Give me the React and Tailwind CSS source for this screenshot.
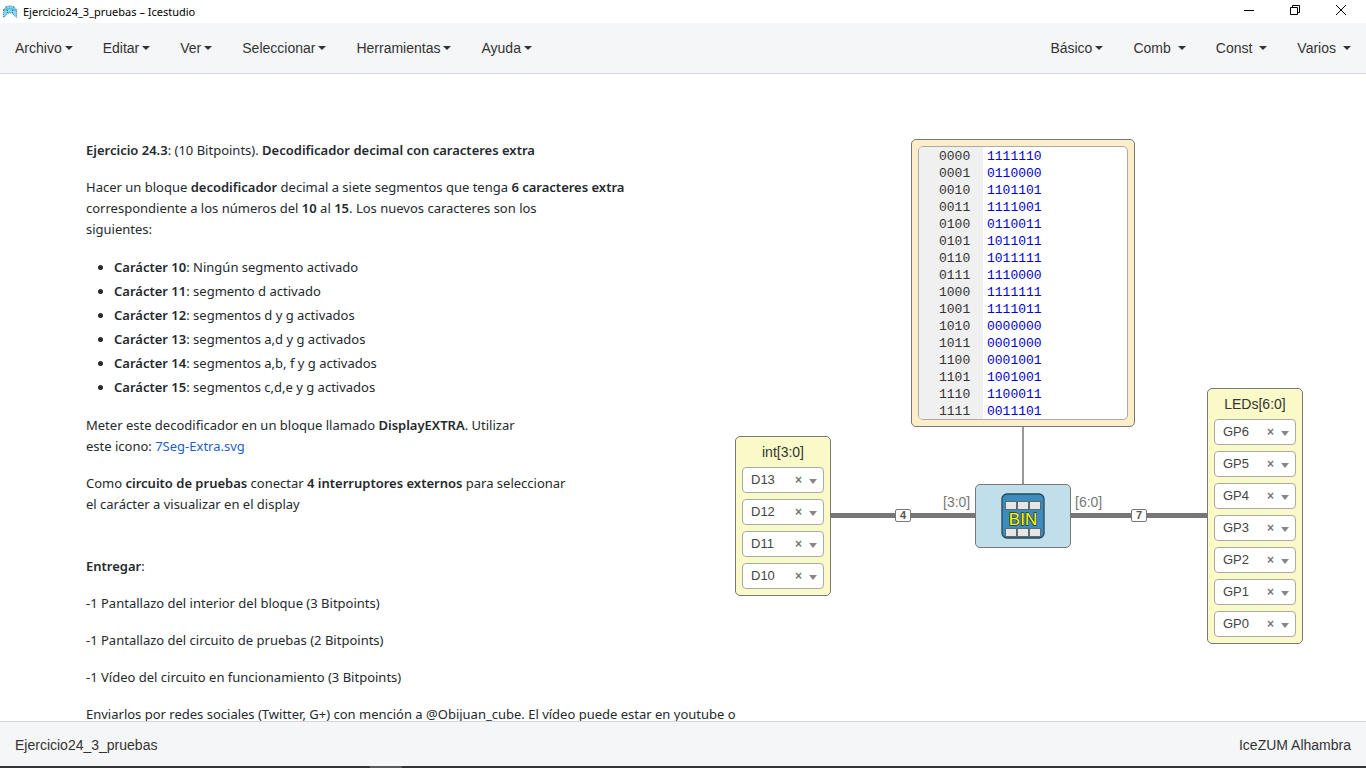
import React from "react";

const leftMenus = ["Archivo", "Editar", "Ver", "Seleccionar", "Herramientas", "Ayuda"];
const rightMenus = [
  { name: "Básico", wide: false },
  { name: "Comb", wide: true },
  { name: "Const", wide: true },
  { name: "Varios", wide: true },
];

const memory = [
  ["0000", "1111110"], ["0001", "0110000"], ["0010", "1101101"], ["0011", "1111001"],
  ["0100", "0110011"], ["0101", "1011011"], ["0110", "1011111"], ["0111", "1110000"],
  ["1000", "1111111"], ["1001", "1111011"], ["1010", "0000000"], ["1011", "0001000"],
  ["1100", "0001001"], ["1101", "1001001"], ["1110", "1100011"], ["1111", "0011101"],
];

const characters = [
  ["Carácter 10", "Ningún segmento activado"],
  ["Carácter 11", "segmento d activado"],
  ["Carácter 12", "segmentos d y g activados"],
  ["Carácter 13", "segmentos a,d y g activados"],
  ["Carácter 14", "segmentos a,b, f y g activados"],
  ["Carácter 15", "segmentos c,d,e y g activados"],
];

function Caret() {
  return (
    <svg className="h-1 w-2" viewBox="0 0 8 4" aria-hidden="true">
      <path d="M0 0h8L4 4z" fill="#333" />
    </svg>
  );
}

function MenuButton({ name, wide }) {
  return (
    <button className={"flex h-full items-center px-[15px] " + (wide ? "gap-[7px]" : "gap-[3px]")}>
      {name}
      <Caret />
    </button>
  );
}

function TitleBar() {
  return (
    <header className="flex h-[23px] shrink-0 items-center bg-white pl-[3px] font-['Noto_Sans',sans-serif] text-[11px] text-black">
      <svg className="mr-1.5 h-3.5 w-3.5" viewBox="0 0 14 14" aria-hidden="true">
        <path d="M.5 5 3 1.500h2L7 .5l2 1h2L13.500 5v7.500L10.500 10 9.500 8h-5l-1 2-3 2.500z" fill="#7fd6f5" />
        <path d="M.5 5 3 1.500h2L7 .5l2 1h2L13.500 5M3 1.500 4.500 5 7 3l2.500 2L11 1.500M.5 5l4 0v3M13.500 5h-4v3M.5 5v7.500l3-2.500 1-2h5l1 2 3 2.500V5" fill="none" stroke="#2b6078" strokeWidth=".8" strokeDasharray="1 1" />
      </svg>
      <h1 className="flex-1">Ejercicio24_3_pruebas – Icestudio</h1>
      <div className="flex pb-1 pr-0.5">
        <button aria-label="Minimizar" className="flex w-[46px] justify-center">
          <svg className="h-3 w-3" viewBox="0 0 12 12"><path d="M1 6.500h10" stroke="#000" /></svg>
        </button>
        <button aria-label="Restaurar" className="flex w-[46px] justify-center">
          <svg className="h-3 w-3" viewBox="0 0 12 12"><path d="M1.500 3.500h7v7h-7zM3.500 3.500v-2h7v7h-2" fill="none" stroke="#000" /></svg>
        </button>
        <button aria-label="Cerrar" className="flex w-[46px] justify-center">
          <svg className="h-3 w-3" viewBox="0 0 12 12"><path d="M1 1l10 10M11 1L1 11" stroke="#000" /></svg>
        </button>
      </div>
    </header>
  );
}

function PinSelect({ pin }) {
  return (
    <div className="relative flex h-[26px] items-center rounded border border-[#aaa] bg-white text-[13px] text-[#444]">
      <select
        aria-label={"Pin " + pin}
        defaultValue={pin}
        className="h-full w-full appearance-none bg-transparent pl-2 outline-none"
      >
        <option value={pin}>{pin}</option>
      </select>
      <button aria-label="Quitar" className="absolute right-[21px] top-1 text-xs leading-4 font-bold text-[#777]">×</button>
      <svg className="pointer-events-none absolute right-1.5 top-[11px] h-[5px] w-2" viewBox="0 0 8 5" aria-hidden="true">
        <path d="M0 0h8L4 5z" fill="#888" />
      </svg>
    </div>
  );
}

function PinBlock({ title, pins }) {
  return (
    <section className="flex w-24 flex-col gap-1.5 rounded-[5px] border border-[#777] bg-[#fafac8] p-1.5">
      <h2 className="h-[18px] text-center text-sm leading-[18px] text-[#333]">{title}</h2>
      {pins.map((pin) => (
        <PinSelect key={pin} pin={pin} />
      ))}
    </section>
  );
}

function MemoryBlock() {
  return (
    <section className="w-56 rounded-[5px] border border-[#777] bg-[#fdeec9] p-1.5">
      <div className="flex h-[274px] overflow-hidden rounded-[5px] border border-[#aaa] bg-white font-['Liberation_Mono',monospace] text-[13px] leading-[17px]">
        <div className="w-16 bg-[#f0f0f0] pl-5 pt-px text-[#333]">
          {memory.map(([address]) => (
            <div key={address}>{address}</div>
          ))}
        </div>
        <textarea
          aria-label="Contenido de la memoria"
          rows={16}
          defaultValue={memory.map(([, value]) => value).join("\n")}
          className="block min-w-0 flex-1 resize-none overflow-hidden pl-1 pt-px text-[#0000cd] outline-none"
        />
      </div>
    </section>
  );
}

function CodeBlock() {
  return (
    <div className="flex h-16 w-24 items-center justify-center rounded-[5px] border border-[#777] bg-[#c0dfeb]">
      <svg className="h-[46px] w-11" viewBox="0 0 44 46" role="img" aria-label="BIN">
        <rect x="1" y="1" width="42" height="44" rx="5" fill="#3d8dbc" stroke="#24485c" strokeWidth="1.300" />
        <g fill="#e6e6e6" stroke="#5a6b75">
          <rect x="4.500" y="8.500" width="11" height="8" />
          <rect x="16.500" y="8.500" width="11" height="8" />
          <rect x="28.500" y="8.500" width="11" height="8" />
          <rect x="4.500" y="35.500" width="11" height="8" />
          <rect x="16.500" y="35.500" width="11" height="8" />
          <rect x="28.500" y="35.500" width="11" height="8" />
        </g>
        <text x="22" y="32" textAnchor="middle" fontFamily="Liberation Sans, sans-serif" fontSize="17" fill="#ff0" stroke="#333" strokeWidth="1.500" paintOrder="stroke">BIN</text>
      </svg>
    </div>
  );
}

function WireSize({ children }) {
  return (
    <span className="flex h-[13px] w-4 items-center justify-center rounded-xs border border-[#777] bg-white text-[11px] leading-none font-bold text-[#555]">
      {children}
    </span>
  );
}

function Notes() {
  return (
    <article className="space-y-4 whitespace-nowrap font-['Noto_Sans',sans-serif] text-[13px] leading-[21px] text-[#24292e] [&_b]:font-semibold">
      <p><b>Ejercicio 24.3</b>: (10 Bitpoints). <b>Decodificador decimal con caracteres extra</b></p>
      <p>
        Hacer un bloque <b>decodificador</b> decimal a siete segmentos que tenga <b>6 caracteres extra</b><br />
        correspondiente a los números del <b>10</b> al <b>15</b>. Los nuevos caracteres son los<br />
        siguientes:
      </p>
      <ul className="list-disc space-y-[3px] py-px pl-7">
        {characters.map(([name, text]) => (
          <li key={name}><b>{name}</b>: {text}</li>
        ))}
      </ul>
      <p>
        Meter este decodificador en un bloque llamado <b>DisplayEXTRA</b>. Utilizar<br />
        este icono: <a href="#icono" className="text-[#1f5fc9]">7Seg-Extra.svg</a>
      </p>
      <p>
        Como <b>circuito de pruebas</b> conectar <b>4 interruptores externos</b> para seleccionar<br />
        el carácter a visualizar en el display
      </p>
      <p className="pt-[25px]"><b>Entregar</b>:</p>
      <p>-1 Pantallazo del interior del bloque (3 Bitpoints)</p>
      <p>-1 Pantallazo del circuito de pruebas (2 Bitpoints)</p>
      <p>-1 Vídeo del circuito en funcionamiento (3 Bitpoints)</p>
      <p>Enviarlos por redes sociales (Twitter, G+) con mención a @Obijuan_cube. El vídeo puede estar en youtube o</p>
    </article>
  );
}

export default function App() {
  return (
    <div className="flex h-screen flex-col overflow-hidden bg-white font-['Liberation_Sans',Arial,sans-serif] text-sm text-[#333]">
      <TitleBar />
      <nav className="flex h-[51px] shrink-0 justify-between border-b border-[#d3d6da] bg-[#f5f6f8]">
        <div className="flex">
          {leftMenus.map((name) => <MenuButton key={name} name={name} />)}
        </div>
        <div className="flex">
          {rightMenus.map((menu) => <MenuButton key={menu.name} {...menu} />)}
        </div>
      </nav>

      <main className="relative min-h-0 flex-1 overflow-hidden">
        <svg className="absolute inset-0 h-full w-full" aria-hidden="true">
          <path d="M830 441.500H976M1070 441.500H1208" stroke="#777" strokeWidth="5" />
          <path d="M1023 352V411" stroke="#999" strokeWidth="2" />
        </svg>
        <div className="absolute left-[86px] top-[66px]"><Notes /></div>
        <div className="absolute left-[911px] top-[65px]"><MemoryBlock /></div>
        <div className="absolute left-[735px] top-[362px]">
          <PinBlock title="int[3:0]" pins={["D13", "D12", "D11", "D10"]} />
        </div>
        <div className="absolute left-[1207px] top-[314px]">
          <PinBlock title="LEDs[6:0]" pins={["GP6", "GP5", "GP4", "GP3", "GP2", "GP1", "GP0"]} />
        </div>
        <div className="absolute left-[975px] top-[410px]"><CodeBlock /></div>
        <span className="absolute left-[943px] top-[418px] text-[#777]">[3:0]</span>
        <span className="absolute left-[1075px] top-[418px] text-[#777]">[6:0]</span>
        <div className="absolute left-[895px] top-[435px]"><WireSize>4</WireSize></div>
        <div className="absolute left-[1131px] top-[435px]"><WireSize>7</WireSize></div>
      </main>

      <footer className="shrink-0">
        <div className="flex h-[45px] items-center justify-between border-t border-[#d3d6da] bg-[#f5f6f8] px-[15px] pt-0.5">
          <span>Ejercicio24_3_pruebas</span>
          <span>IceZUM Alhambra</span>
        </div>
        <div className="h-0.5 bg-[#333] pl-[370px]">
          <div className="h-full w-8 bg-[#5c5c5c]" />
        </div>
      </footer>
    </div>
  );
}
